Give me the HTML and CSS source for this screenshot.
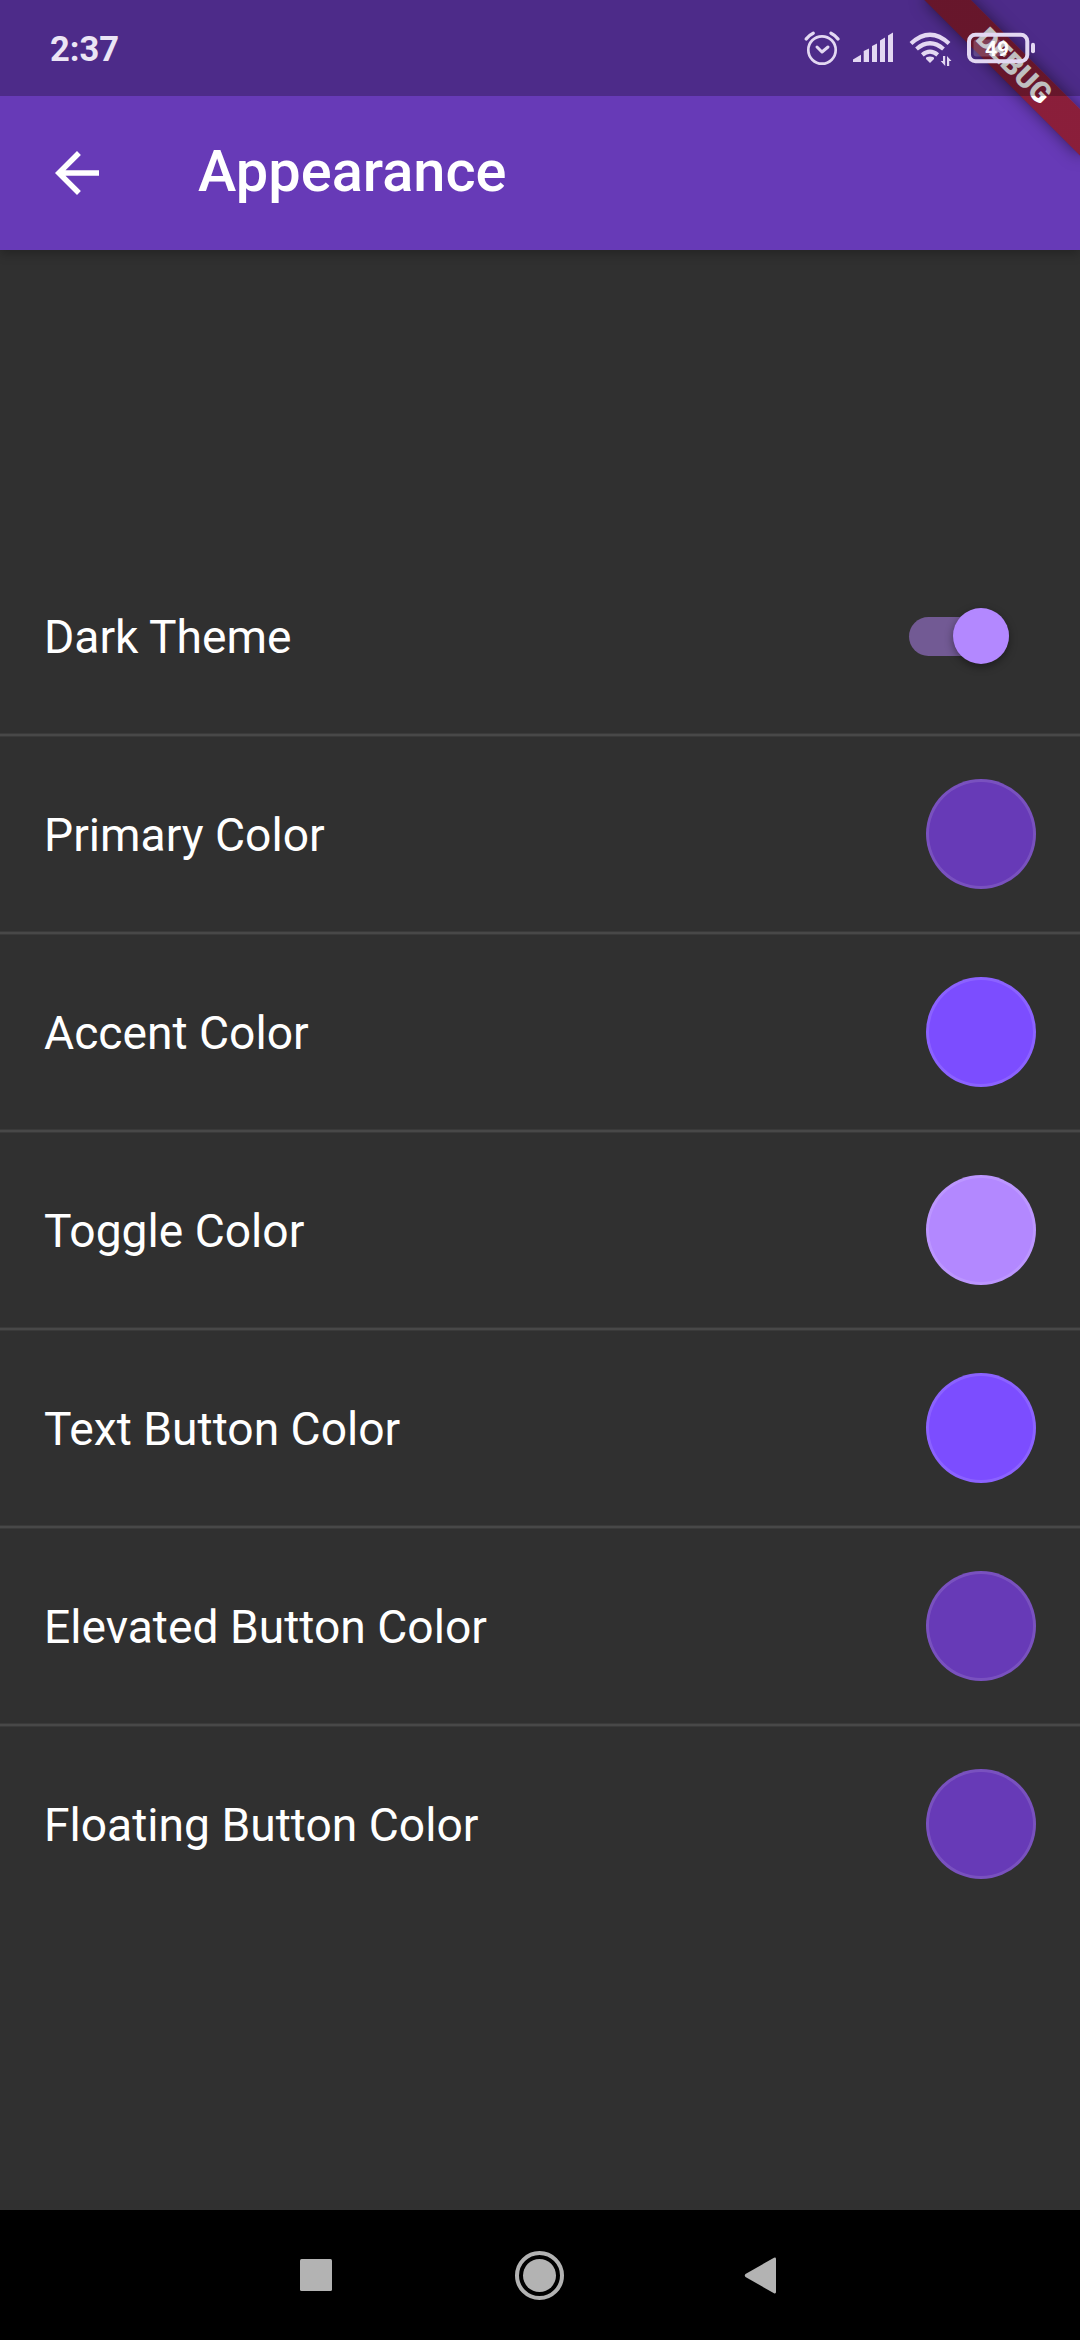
FILE: index.html
```html
<!DOCTYPE html>
<html lang="en">
<head>
<meta charset="utf-8">
<title>Appearance</title>
<link rel="stylesheet" href="styles.css">
</head>
<body>
<div class="screen">
  <header class="top">
    <div class="status">
      <span class="clock">2:37</span>
      <svg class="status-icons" width="280" height="96" viewBox="0 0 280 96" fill="none" stroke="#e3d8f2">
        <g stroke-width="2.7" stroke-linecap="round" stroke-linejoin="round">
          <circle cx="22" cy="50" r="13.7"/>
          <path d="M17 47l5 5 6-5" stroke-width="3"/>
          <path d="M6.200 39q3-4 7-5.800M31 33.200q4 1.800 7 5.800" stroke-width="3.400"/>
        </g>
        <g fill="#e3d8f2" stroke="none">
          <path d="M53 62v-2.500l8-4.800V62zM63.700 62V51l5.300-2.500V62zM72 62V46l5-2.500V62zM80 62V40.500l5-3V62zM88 62V35.500l5-3V62z"/>
          <path d="M130 63l-4-4q-.5-1.500 1-2 3-1.200 6 0 1.500.5 1 2z"/>
          <path d="M145.200 66l-4.500-5h2.300v-5h2.200zM147 56l4.500 5h-2.300v5H147z"/>
          <rect x="231" y="42.700" width="4" height="10.600" rx="2"/>
        </g>
        <g stroke-width="4.200">
          <path d="M111 43.500q19-17.500 38 0M116.500 49q13.500-11.500 27 0M122.300 54.800q7.700-6.400 15.400 0"/>
        </g>
        <rect x="173.500" y="39.500" width="27" height="17" rx="3" fill="#e3d8f2" stroke="none" opacity="0.22"/>
        <rect x="169" y="34.700" width="58.300" height="26.500" rx="6.500" stroke-width="4"/>
        <text class="battery" x="197" y="56" text-anchor="middle">49</text>
      </svg>
    </div>
    <div class="appbar">
      <svg class="back" width="66" height="66" viewBox="0 0 24 24" fill="#fff"><path d="M20 11H7.830l5.590-5.590L12 4l-8 8 8 8 1.410-1.410L7.830 13H20v-2z"/></svg>
      <h1 class="title">Appearance</h1>
    </div>
    <div class="banner-clip"><div class="banner">DEBUG</div></div>
  </header>
  <main class="list">
    <div class="row"><span class="label">Dark Theme</span><span class="switch"><span class="thumb"></span></span></div>
    <div class="row"><span class="label">Primary Color</span><span class="swatch deep"></span></div>
    <div class="row"><span class="label">Accent Color</span><span class="swatch accent"></span></div>
    <div class="row"><span class="label">Toggle Color</span><span class="swatch light"></span></div>
    <div class="row"><span class="label">Text Button Color</span><span class="swatch accent"></span></div>
    <div class="row"><span class="label">Elevated Button Color</span><span class="swatch deep"></span></div>
    <div class="row"><span class="label">Floating Button Color</span><span class="swatch deep"></span></div>
  </main>
  <nav class="nav">
    <svg width="1080" height="130" viewBox="0 0 1080 130" fill="#b3b3b3">
      <rect x="300" y="49" width="32" height="32" rx="1.500"/>
      <circle cx="539.500" cy="65.500" r="16.500"/>
      <circle cx="539.500" cy="65.500" r="22.500" fill="none" stroke="#b3b3b3" stroke-width="4"/>
      <path d="M776 49v33q0 2-2 1.300L745.500 67q-1.500-1.500 0-3L774 47.700q2-.7 2 1.300z"/>
    </svg>
  </nav>
</div>
</body>
</html>
```
FILE: styles.css
```css
body { margin: 0; }
.screen {
  width: 1080px;
  height: 2340px;
  display: flex;
  flex-direction: column;
  overflow: hidden;
  background: #303030;
  color: #fff;
  font-family: Roboto, sans-serif;
}
.top {
  position: relative;
  z-index: 1;
  height: 250px;
  flex: none;
  background: #673ab7;
  box-shadow: 0 4px 10px rgba(0, 0, 0, 0.25);
}
.status {
  position: relative;
  z-index: 2;
  height: 96px;
  box-sizing: border-box;
  padding-left: 50px;
  display: flex;
  justify-content: space-between;
  align-items: center;
  background: rgba(0, 0, 0, 0.25);
}
.clock {
  padding-top: 2px;
  font-size: 34.5px;
  font-weight: 700;
  color: #ebe5f5;
}
.battery { font-size: 21px; font-weight: 700; fill: #fff; stroke: none; }
.appbar { height: 154px; display: flex; align-items: center; padding-left: 44px; }
.title { margin: 0 0 5px 88px; font-size: 57.75px; font-weight: 500; }
.banner-clip {
  position: absolute;
  inset: 0;
  overflow: hidden;
}
.banner {
  position: absolute;
  right: -110px;
  top: 77px;
  width: 220px;
  height: 33px;
  transform: rotate(45deg);
  transform-origin: 110px -77px;
  background: linear-gradient(rgba(183, 28, 28, 0.63), rgba(183, 28, 28, 0.63)), rgba(0, 0, 0, 0.4);
  box-shadow: 0 0 16px rgba(0, 0, 0, 0.5);
  font-size: 29px;
  font-weight: 900;
  line-height: 33px;
  text-align: center;
}
.list { flex: 1; padding-top: 289px; }
.row {
  height: 194px;
  padding: 0 44px;
  display: flex;
  align-items: center;
  justify-content: space-between;
  font-size: 46.2px;
}
.row + .row {
  padding-top: 4px;
  background: linear-gradient(#3a3a3a 1px, #484848 1px 3px, #3a3a3a 3px 4px, transparent 4px);
}
.label { padding-top: 2px; }
.switch {
  width: 100px;
  height: 39px;
  margin-right: 27px;
  border-radius: 20px;
  background: #725a94;
  display: flex;
  align-items: center;
  justify-content: flex-end;
}
.thumb {
  flex: none;
  width: 56px;
  height: 56px;
  border-radius: 50%;
  background: #b388ff;
  box-shadow: 0 3px 8px rgba(0, 0, 0, 0.4);
}
.swatch {
  box-sizing: border-box;
  width: 110px;
  height: 110px;
  border-radius: 50%;
  border: 3px solid rgba(255, 255, 255, 0.12);
}
.deep { background-color: #673ab7; }
.accent { background-color: #7c4dff; }
.light { background-color: #b388ff; }
.nav { flex: none; height: 130px; background: #000; }
.nav svg { display: block; }
```
